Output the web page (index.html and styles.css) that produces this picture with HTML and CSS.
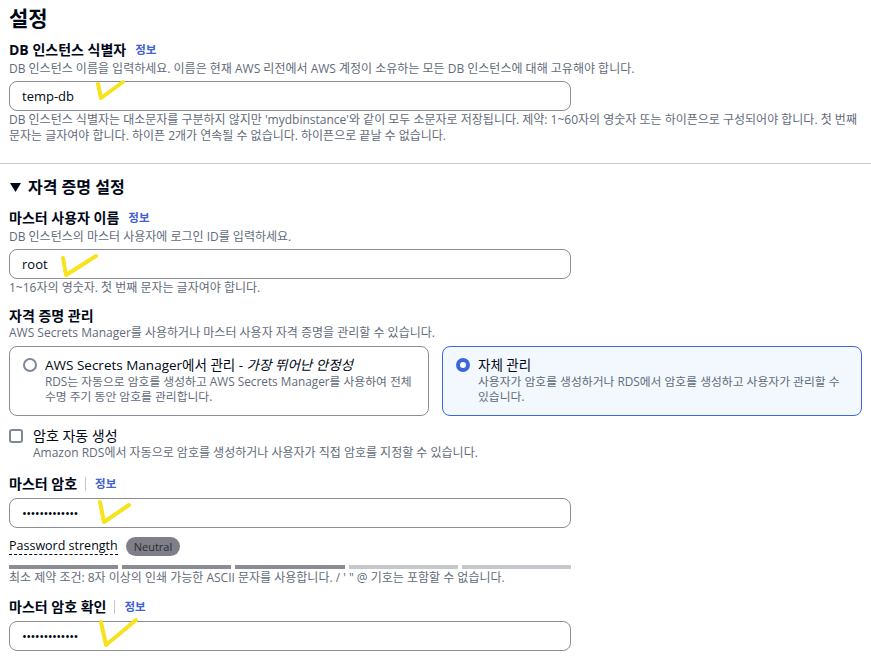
FILE: index.html
```html
<!DOCTYPE html>
<html lang="ko">
<head>
    <meta charset="UTF-8">
    <meta name="viewport" content="width=device-width, initial-scale=1.0">
    <title>설정</title>
    <link rel="stylesheet" href="styles.css">
</head>
<body>
    <div class="page">
        <h1 class="title">설정</h1>

        <div class="field first">
            <div class="label">DB 인스턴스 식별자 <a class="info" href="#">정보</a></div>
            <div class="desc">DB 인스턴스 이름을 입력하세요. 이름은 현재 AWS 리전에서 AWS 계정이 소유하는 모든 DB 인스턴스에 대해 고유해야 합니다.</div>
            <div class="input-wrap">
                <input class="text-input" type="text" value="temp-db">
                <svg class="mark" style="left: 84px; top: -4px;" width="40" height="32" viewBox="0 0 40 32"><path d="M5 7 L8 21 L30 5"/></svg>
            </div>
            <div class="help">DB 인스턴스 식별자는 대소문자를 구분하지 않지만 'mydbinstance'와 같이 모두 소문자로 저장됩니다. 제약: 1~60자의 영숫자 또는 하이픈으로 구성되어야 합니다. 첫 번째 문자는 글자여야 합니다. 하이픈 2개가 연속될 수 없습니다. 하이픈으로 끝날 수 없습니다.</div>
        </div>
    </div>

    <hr class="divider">

    <div class="page">
        <div class="section-head">
            <svg width="11" height="9" viewBox="0 0 11 9"><path d="M0 0 H11 L5.5 9 Z" fill="#000716"/></svg>
            자격 증명 설정
        </div>

        <div class="field">
            <div class="label">마스터 사용자 이름 <a class="info" href="#">정보</a></div>
            <div class="desc">DB 인스턴스의 마스터 사용자에 로그인 ID를 입력하세요.</div>
            <div class="input-wrap">
                <input class="text-input" type="text" value="root">
                <svg class="mark" style="left: 48px; top: 1px;" width="44" height="32" viewBox="0 0 44 32"><path d="M6 8 L9 25 L39 6"/></svg>
            </div>
            <div class="help">1~16자의 영숫자. 첫 번째 문자는 글자여야 합니다.</div>
        </div>

        <div class="field">
            <div class="label">자격 증명 관리</div>
            <div class="desc tight">AWS Secrets Manager를 사용하거나 마스터 사용자 자격 증명을 관리할 수 있습니다.</div>
            <div class="cards">
                <div class="card">
                    <span class="radio"></span>
                    <div class="card-body">
                        <div class="card-title">AWS Secrets Manager에서 관리 - <em>가장 뛰어난 안정성</em></div>
                        <div class="card-desc">RDS는 자동으로 암호를 생성하고 AWS Secrets Manager를 사용하여 전체 수명 주기 동안 암호를 관리합니다.</div>
                    </div>
                </div>
                <div class="card selected">
                    <span class="radio checked"></span>
                    <div class="card-body">
                        <div class="card-title">자체 관리</div>
                        <div class="card-desc">사용자가 암호를 생성하거나 RDS에서 암호를 생성하고 사용자가 관리할 수 있습니다.</div>
                    </div>
                </div>
            </div>
        </div>

        <div class="check-row">
            <span class="checkbox"></span>
            <div>
                <div class="check-label">암호 자동 생성</div>
                <div class="desc">Amazon RDS에서 자동으로 암호를 생성하거나 사용자가 직접 암호를 지정할 수 있습니다.</div>
            </div>
        </div>

        <div class="field pw">
            <div class="label">마스터 암호 <span class="sep"></span><a class="info" href="#">정보</a></div>
            <div class="input-wrap">
                <input class="text-input dots" type="text" value="•••••••••••••">
                <svg class="mark" style="left: 86px; top: -2px;" width="40" height="32" viewBox="0 0 40 32"><path d="M5 6 L9 26 L34 9"/></svg>
            </div>
            <div class="strength">
                <span class="strength-label">Password strength</span>
                <span class="badge">Neutral</span>
            </div>
            <div class="bars">
                <span class="bar on"></span>
                <span class="bar on"></span>
                <span class="bar on"></span>
                <span class="bar"></span>
                <span class="bar"></span>
            </div>
            <div class="help">최소 제약 조건: 8자 이상의 인쇄 가능한 ASCII 문자를 사용합니다. / ' " @ 기호는 포함할 수 없습니다.</div>
        </div>

        <div class="field pw confirm">
            <div class="label">마스터 암호 확인 <span class="sep"></span><a class="info" href="#">정보</a></div>
            <div class="input-wrap">
                <input class="text-input dots" type="text" value="•••••••••••••">
                <svg class="mark" style="left: 87px; top: -4px;" width="44" height="32" viewBox="0 0 44 32"><path d="M5 5 L10 28 L40 3"/></svg>
            </div>
        </div>
    </div>
</body>
</html>
```

FILE: styles.css
```css
body {
    margin: 0;
    font-family: "Open Sans", "Noto Sans CJK KR", sans-serif;
    color: #000716;
    background-color: #ffffff;
    word-break: keep-all;
}
.page {
    padding: 0 9px;
}
.title {
    margin: 0;
    padding-top: 5px;
    font-size: 21px;
    line-height: 26px;
    font-weight: 700;
}
.field {
    margin-top: 11px;
}
.field.first {
    margin-top: 10px;
}
.label {
    display: flex;
    align-items: center;
    font-size: 14px;
    line-height: 18px;
    font-weight: 700;
}
.info {
    margin-left: 9px;
    font-size: 11.5px;
    font-weight: 700;
    color: #3f62d0;
    text-decoration: none;
}
.sep {
    display: inline-block;
    width: 1px;
    height: 14px;
    margin-left: 8px;
    margin-right: 0;
    background-color: #c6c6cd;
}
.desc {
    margin-top: 2px;
    font-size: 12px;
    line-height: 16px;
    color: #5f6b7a;
}
.desc.tight {
    margin-top: 0;
}
.input-wrap {
    position: relative;
    margin-top: 4px;
    width: 562px;
}
.text-input {
    box-sizing: border-box;
    display: block;
    width: 562px;
    height: 30px;
    padding: 0 12px;
    border: 1px solid #8c8c94;
    border-radius: 8px;
    font-family: "Open Sans", "Noto Sans CJK KR", sans-serif;
    font-size: 13px;
    color: #000716;
    outline: none;
}
.text-input.dots {
    font-size: 13px;
    letter-spacing: -0.6px;
}
.mark {
    position: absolute;
    pointer-events: none;
}
.mark path {
    fill: none;
    stroke: #f8e21c;
    stroke-width: 4;
    stroke-linecap: round;
    stroke-linejoin: round;
}
.help {
    margin-top: 1px;
    font-size: 12px;
    line-height: 16px;
    color: #5f6b7a;
}
.divider {
    margin: 19px 0 0;
    border: 0;
    border-top: 1px solid #c6c6cd;
}
.section-head {
    display: flex;
    align-items: center;
    gap: 7px;
    margin-top: 12px;
    font-size: 16px;
    line-height: 22px;
    font-weight: 700;
    padding-left: 1px;
}
.cards {
    display: flex;
    gap: 13px;
    margin-top: 5px;
    width: 853px;
}
.card {
    box-sizing: border-box;
    flex: 1;
    display: flex;
    gap: 8px;
    height: 70px;
    padding: 9px 4px 0 13px;
    border: 1px solid #8c8c94;
    border-radius: 8px;
}
.card.selected {
    border-color: #3f66d8;
    background-color: #f2f8fd;
}
.radio {
    box-sizing: border-box;
    flex: none;
    width: 14px;
    height: 14px;
    margin-top: 2px;
    border: 2px solid #7d8998;
    border-radius: 50%;
    background-color: #fff;
}
.radio.checked {
    border: 4px solid #3f66d8;
}
.card-title {
    font-size: 13.5px;
    line-height: 18px;
}
.card-title em {
    font-style: italic;
}
.card-desc {
    font-size: 11.8px;
    line-height: 15px;
    color: #5f6b7a;
}
.check-row {
    display: flex;
    gap: 10px;
    margin-top: 11px;
}
.checkbox {
    box-sizing: border-box;
    flex: none;
    width: 14px;
    height: 14px;
    margin-top: 2px;
    border: 2px solid #7d8998;
    border-radius: 3px;
}
.check-label {
    font-size: 14px;
    line-height: 18px;
}
.check-row .desc {
    margin-top: 0;
}
.field.pw {
    margin-top: 14px;
}
.field.pw .input-wrap {
    margin-top: 5px;
}
.field.confirm {
    margin-top: 12px;
}
.strength {
    display: flex;
    align-items: center;
    gap: 8px;
    margin-top: 8px;
    height: 20px;
}
.strength-label {
    font-size: 12.5px;
    line-height: 16px;
    border-bottom: 1px dashed #000716;
}
.badge {
    padding: 0 8px;
    height: 19px;
    line-height: 19px;
    border-radius: 10px;
    background-color: #7f7f88;
    color: #2b2b36;
    font-size: 11px;
}
.bars {
    display: flex;
    gap: 4px;
    width: 562px;
    margin-top: 9px;
}
.bar {
    flex: 1;
    height: 4px;
    background-color: #c6c6cd;
}
.bar.on {
    background-color: #8c8c94;
}
.pw .help {
    margin-top: 1px;
}
```
